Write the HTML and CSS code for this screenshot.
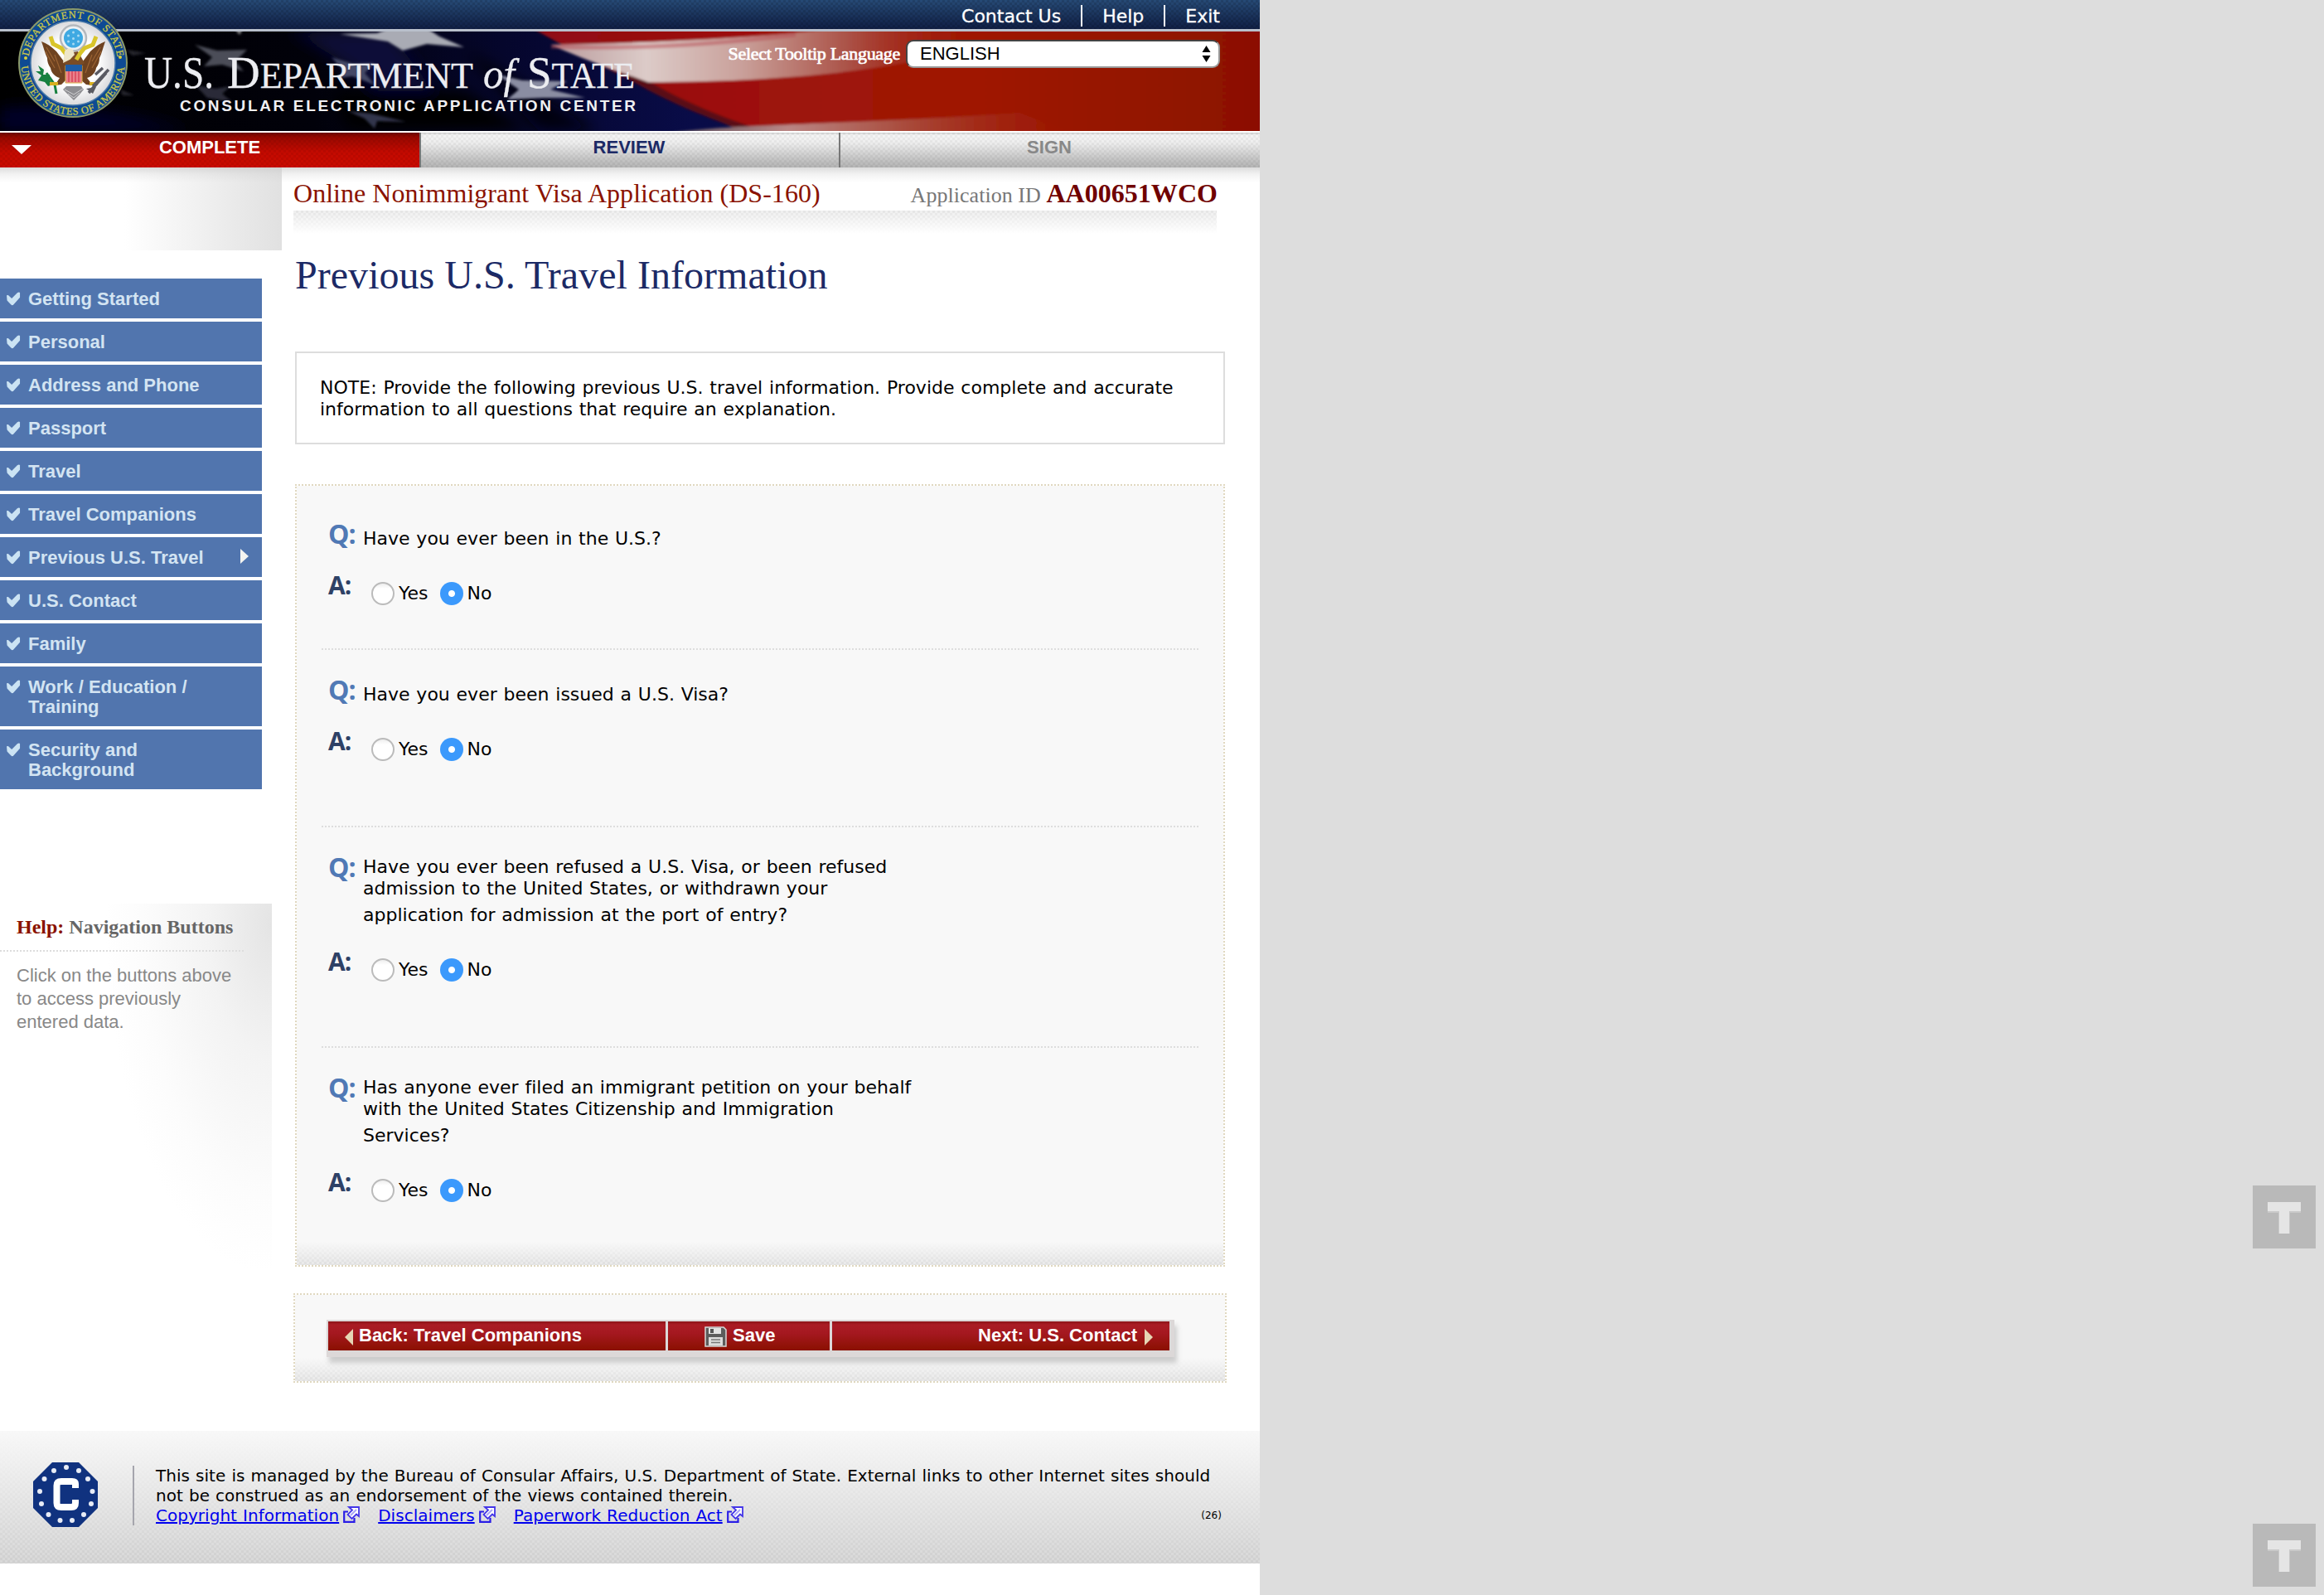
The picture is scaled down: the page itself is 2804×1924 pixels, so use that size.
FILE: index.html
```html
<!DOCTYPE html>
<html lang="en">
<head>
<meta charset="utf-8">
<title>Online Nonimmigrant Visa Application (DS-160)</title>
<link rel="stylesheet" href="styles.css">
</head>
<body>
<svg class="defs" width="0" height="0" aria-hidden="true">
  <defs>
    <symbol id="check" viewBox="0 0 18 18">
      <path d="M0 4 L2 3.6 L6.500 8 L13.6 .8 Q15.5 -.4 17 .4 L17 6.6 L9 15.6 Q7.4 18 5.4 15.6 L.6 10.6 Z" fill="#cbe3f3"/>
    </symbol>
    <symbol id="ext" viewBox="0 0 20 20">
      <path d="M6 6.500H1.200V18.800H13.500V14" fill="none" stroke="#2a1ee6" stroke-width="2.200"/>
      <path d="M7 1H19V12L16 9.500L10.500 15L5.500 10L11 4.600Z" fill="#fff" stroke="#4436e8" stroke-width="1.800"/>
      <path d="M9 11L16 4" stroke="#a9a4f5" stroke-width="2"/>
    </symbol>
    <symbol id="tee" viewBox="0 0 76 76">
      <rect width="76" height="76" fill="#b9b9b9"/>
      <path d="M18 21h40v12H45v25H31V33H18z" fill="#c9c9c9"/>
      <path d="M18 20h40v11H44v27H32V31H18z" fill="#e5e5e5"/>
    </symbol>
  </defs>
</svg>
<div class="page">
  <header class="header">
    <nav class="topbar">
      <a>Contact Us</a><a>Help</a><a>Exit</a>
    </nav>
    <div class="banner">
      <svg class="flag" width="1520" height="120" viewBox="0 38 1520 120" aria-hidden="true">
        <defs>
          <linearGradient id="red" x1="0" x2="1"><stop offset="0" stop-color="#8f0a12"/><stop offset=".25" stop-color="#9c1010"/><stop offset=".6" stop-color="#9f1700"/><stop offset="1" stop-color="#8a1000"/></linearGradient>
          <linearGradient id="navy" x1="0" x2="1"><stop offset="0" stop-color="#000"/><stop offset=".25" stop-color="#01010a"/><stop offset=".4" stop-color="#05062c"/><stop offset=".55" stop-color="#090c48"/><stop offset="1" stop-color="#0a0a3c"/></linearGradient>
          <linearGradient id="white" x1="0" x2="1"><stop offset="0" stop-color="#b99a9c"/><stop offset=".2" stop-color="#dccbc8"/><stop offset=".4" stop-color="#c9a09a"/><stop offset=".62" stop-color="#ab5348"/><stop offset=".9" stop-color="#9f1a08" stop-opacity="0"/></linearGradient>
          <linearGradient id="low" x1="0" x2="1"><stop offset="0" stop-color="#55505f"/><stop offset=".3" stop-color="#b98684"/><stop offset=".6" stop-color="#a84838"/><stop offset="1" stop-color="#a02010" stop-opacity="0"/></linearGradient>
          <filter id="soft" x="-10%" y="-10%" width="120%" height="120%"><feGaussianBlur stdDeviation="1.500"/></filter>
          <filter id="softer" x="-20%" y="-40%" width="140%" height="180%"><feGaussianBlur stdDeviation="9"/></filter>
        </defs>
        <rect y="38" width="1520" height="120" fill="url(#navy)"/>
        <g filter="url(#softer)">
          <path d="M0 130 Q120 125 230 158 H0Z" fill="#04062c"/>
          <path d="M350 38 H470 L560 158 H500 Q450 90 350 38Z" fill="#070838"/>
          <path d="M400 110 H560 L640 158 H420Z" fill="#000"/>
          <path d="M560 60 L720 158 H650Z" fill="#000010"/>
        </g>
        <g filter="url(#soft)">
          <path d="M635 30 H1540 V170 H925 C850 140 740 90 635 30Z" fill="url(#red)"/>
          <path d="M665 54 C760 52 900 48 1010 34 H1240 C1150 68 1040 98 780 99 C740 84 700 70 665 54Z" fill="url(#white)"/>
          <path d="M665 56 C760 60 860 54 960 42" fill="none" stroke="#b54a52" stroke-width="5" opacity=".5"/>
          <path d="M790 102 C830 125 870 140 920 158 L900 158 C830 135 780 110 740 84Z" fill="#5a0812"/>
          <path d="M800 162 C850 150 1040 150 1230 136 L1300 162Z" fill="url(#low)"/>
          <path d="M410 41 L455 40 L470 34 H515 L530 44 L560 57 L515 53 L486 61 L468 50Z" fill="#a9abb4"/>
          <path d="M235 54 L262 61 L298 60 L284 74 L294 86 L268 78 L246 80 L256 69Z" fill="#4b4d58"/>
          <path d="M400 69 L426 77 L452 76 L440 88 L452 102 L425 92 L410 94 L413 84Z" fill="#454866"/>
          <path d="M600 90 L630 97 L684 98 L664 108 L706 118 L655 118 L612 120 L626 108Z" fill="#8a8da2"/>
          <path d="M420 134 L448 137 L490 147 L455 146 L452 155 L440 143Z" fill="#33344c"/>
          <path d="M236 103 L260 107 L278 104 L268 113 L280 123 L250 118Z" fill="#2a2b38"/>
          <path d="M282 34 H294 L289 42Z" fill="#888"/>
          <path d="M152 60 L176 64 L160 67Z M145 108 L162 115 L148 115Z" fill="#26262e"/>
        </g>
      </svg>
      <svg class="logo" width="780" height="150" viewBox="0 0 780 150">
        <defs>
          <path id="arcTop" d="M34 76 A54 54 0 0 1 142 76"/>
          <path id="arcBot" d="M25.500 76 A62.500 62.500 0 0 0 150.500 76"/>
          <radialGradient id="disc"><stop offset=".6" stop-color="#fff"/><stop offset="1" stop-color="#d9d9dc"/></radialGradient>
        </defs>
        <circle cx="88" cy="76" r="66" fill="#8c9a6a"/>
        <circle cx="88" cy="76" r="64" fill="#0e4a93"/>
        <circle cx="88" cy="76" r="51" fill="url(#disc)" stroke="#4d7ba8" stroke-width="1.500"/>
        <text class="seal-text"><textPath href="#arcTop" startOffset="8" textLength="154">DEPARTMENT OF STATE</textPath></text>
        <text class="seal-text"><textPath href="#arcBot" startOffset="4" textLength="187">UNITED STATES OF AMERICA</textPath></text>
        <circle cx="31" cy="70" r="2" fill="#d8cf3c"/><circle cx="145" cy="69" r="2" fill="#d8cf3c"/>
        <circle cx="88.500" cy="46" r="15.500" fill="#eef1f3" stroke="#b4b8bd" stroke-width="2.500"/>
        <circle cx="88.500" cy="46" r="11.500" fill="#3fa9e2"/>
        <g fill="#a9dbf3"><circle cx="88.500" cy="39" r="1.500"/><circle cx="82.500" cy="43" r="1.500"/><circle cx="94.500" cy="43" r="1.500"/><circle cx="88.500" cy="46.500" r="1.500"/><circle cx="82.500" cy="50" r="1.500"/><circle cx="94.500" cy="50" r="1.500"/><circle cx="88.500" cy="53" r="1.500"/></g>
        <path d="M50 50 C56 52 62 56 68 62 L80 78 L80 96 L74 102 L66 103 L72 94 C66 92 62 88 61 82 C58 78 57 74 57 70 C54 64 53 58 50 50Z" fill="#6e4220"/>
        <path d="M127 50 C121 52 115 56 109 62 L97 78 L97 96 L104 102 L112 103 L105 94 C111 92 115 88 116 82 C119 78 120 74 120 70 C123 64 124 58 127 50Z" fill="#6e4220"/>
        <path d="M56 57 L66 74 M55 62 L66 82 M121 57 L111 74 M122 62 L111 82 M66 66 L74 88 M111 66 L103 88" stroke="#9c6434" stroke-width="1.200" fill="none"/>
        <path d="M82 64 L76 76 L80 79 H98 L102 76 L94 62Z" fill="#7a4c26"/>
        <path d="M61 44 L64 53 L74 58 L80 66 L86 70 M116 44 L112 54 L102 58 L97 64 L92 72" stroke="#d9c52a" stroke-width="5" fill="none"/>
        <path d="M78 62 Q82 56 88 60 L90 66 L84 72 L76 76Z" fill="#eee6c8"/>
        <path d="M79 79 H99 V100 H79Z" fill="#e9828c" stroke="#d9b64a"/>
        <path d="M83 86V99M87 86V99M91 86V99M95 86V99" stroke="#d9465a" stroke-width="1.500"/>
        <rect x="79" y="78" width="20" height="8" fill="#1d5ca6"/>
        <path d="M76 108 L80 104 H98 L101 108 L96 114 L89 121 L82 114Z" fill="#8e8e92"/>
        <path d="M78 108 L89 114 L100 107 M82 113 L89 118 L96 112" stroke="#d0d0d2" fill="none"/>
        <path d="M46 79 L53 84 L52 90 L60 90 L60 96 L64 102 L58 104 L54 99 L46 97 L50 91 L43 86 L49 86Z" fill="#17803f"/>
        <path d="M56 88 L66 102 L68 113" stroke="#17803f" stroke-width="3" fill="none"/>
        <path d="M60 101 H70M108 101H118" stroke="#d9b020" stroke-width="4"/>
        <path d="M107 112 L128 88 M112 104 L131 84 M115 90 L124 82" stroke="#5a5a62" stroke-width="3.500"/>
        <path d="M104 107 L116 105 L112 113Z" fill="#5a5a62"/>
        <g class="logo-name">
          <text x="174" y="106" font-size="55" textLength="84" lengthAdjust="spacingAndGlyphs">U.S.</text>
          <text x="274" y="106" textLength="297" lengthAdjust="spacingAndGlyphs"><tspan font-size="55">D</tspan><tspan font-size="44">EPARTMENT</tspan></text>
          <text x="583" y="106" font-size="50" font-style="italic" textLength="38" lengthAdjust="spacingAndGlyphs">of</text>
          <text x="636" y="106" textLength="130" lengthAdjust="spacingAndGlyphs"><tspan font-size="55">S</tspan><tspan font-size="44">TATE</tspan></text>
        </g>
        <text class="logo-sub" x="217" y="134" textLength="550">CONSULAR ELECTRONIC APPLICATION CENTER</text>
      </svg>
      <div class="lang">
        <label class="lang-label">Select Tooltip Language</label>
        <div class="lang-select"><span>ENGLISH</span>
          <svg width="11" height="20" viewBox="0 0 11 20"><path d="M5.500 0L10.500 8H.5ZM5.500 20L.5 12H10.500Z"/></svg>
        </div>
      </div>
    </div>
    <nav class="tabs">
      <a class="tab tab-active"><svg class="tab-arrow" width="24" height="11" viewBox="0 0 24 11"><path d="M0 0H24L12 11Z" fill="#fff"/></svg>COMPLETE</a>
      <a class="tab tab-next">REVIEW</a>
      <a class="tab tab-off">SIGN</a>
    </nav>
  </header>
  <div class="columns">
    <aside class="side">
      <div class="side-shade"></div>
      <ul class="menu">
        <li><svg class="ck"><use href="#check"/></svg><span>Getting Started</span></li>
        <li><svg class="ck"><use href="#check"/></svg><span>Personal</span></li>
        <li><svg class="ck"><use href="#check"/></svg><span>Address and Phone</span></li>
        <li><svg class="ck"><use href="#check"/></svg><span>Passport</span></li>
        <li><svg class="ck"><use href="#check"/></svg><span>Travel</span></li>
        <li><svg class="ck"><use href="#check"/></svg><span>Travel Companions</span></li>
        <li><svg class="ck"><use href="#check"/></svg><span>Previous U.S. Travel</span><svg class="here" width="10" height="18" viewBox="0 0 10 18"><path d="M0 0L10 9L0 18Z" fill="#f4f4f0"/></svg></li>
        <li><svg class="ck"><use href="#check"/></svg><span>U.S. Contact</span></li>
        <li><svg class="ck"><use href="#check"/></svg><span>Family</span></li>
        <li><svg class="ck"><use href="#check"/></svg><span>Work / Education /<br>Training</span></li>
        <li><svg class="ck"><use href="#check"/></svg><span>Security and<br>Background</span></li>
      </ul>
      <section class="help">
        <h3><em>Help:</em> Navigation Buttons</h3>
        <p>Click on the buttons above<br>to access previously<br>entered data.</p>
      </section>
    </aside>
    <main class="main">
      <div class="form-head">
        <span class="form-title">Online Nonimmigrant Visa Application (DS-160)</span>
        <span class="app-id">Application ID <b>AA00651WCO</b></span>
      </div>
      <div class="form-rule"></div>
      <h1>Previous U.S. Travel Information</h1>
      <div class="note">NOTE: Provide the following previous U.S. travel information. Provide complete and accurate<br>information to all questions that require an explanation.</div>
      <div class="panel">
        <section class="qa qa-1">
          <span class="q">Q:</span><p>Have you ever been in the U.S.?</p>
          <span class="a">A:</span><div class="choices"><i class="radio"></i><label>Yes</label><i class="radio on"></i><label>No</label></div>
        </section>
        <section class="qa qa-2">
          <span class="q">Q:</span><p>Have you ever been issued a U.S. Visa?</p>
          <span class="a">A:</span><div class="choices"><i class="radio"></i><label>Yes</label><i class="radio on"></i><label>No</label></div>
        </section>
        <section class="qa qa-long">
          <span class="q">Q:</span><p>Have you ever been refused a U.S. Visa, or been refused<br>admission to the United States, or withdrawn your<span class="last">application for admission at the port of entry?</span></p>
          <span class="a">A:</span><div class="choices"><i class="radio"></i><label>Yes</label><i class="radio on"></i><label>No</label></div>
        </section>
        <section class="qa qa-long">
          <span class="q">Q:</span><p>Has anyone ever filed an immigrant petition on your behalf<br>with the United States Citizenship and Immigration<span class="last">Services?</span></p>
          <span class="a">A:</span><div class="choices"><i class="radio"></i><label>Yes</label><i class="radio on"></i><label>No</label></div>
        </section>
      </div>
      <div class="actions">
        <div class="buttons">
          <a class="btn btn-back"><svg width="10" height="20" viewBox="0 0 10 20"><path d="M10 0V20L0 10Z" fill="#e6d6b4"/></svg><span>Back: Travel Companions</span></a>
          <a class="btn btn-save"><svg width="27" height="25" viewBox="0 0 27 25"><path d="M1 1H23L26 4V24H1Z" fill="#5c5c5c" stroke="#d8d8d8" stroke-width="1.500"/><rect x="5" y="2" width="15" height="7" fill="#e2e2e2"/><rect x="7" y="3" width="4" height="5" fill="#555"/><rect x="5" y="13" width="17" height="10" fill="#dcdcdc"/><path d="M8 16H19M8 19.500H19" stroke="#777" stroke-width="1.500"/></svg><span>Save</span></a>
          <a class="btn btn-fwd"><span>Next: U.S. Contact</span><svg width="10" height="20" viewBox="0 0 10 20"><path d="M0 0V20L10 10Z" fill="#e6d6b4"/></svg></a>
        </div>
      </div>
    </main>
  </div>
  <footer class="footer">
    <svg class="ca" width="78" height="78" viewBox="0 0 78 78">
      <path d="M23 0H55L78 23V55L55 78H23L0 55V23Z" fill="#10327f"/>
      <g fill="#e8ecf6"><circle cx="40" cy="6" r="3"/><circle cx="55" cy="10" r="3"/><circle cx="25" cy="10" r="3"/><circle cx="66" cy="20" r="3"/><circle cx="13.500" cy="20" r="3"/><circle cx="71.500" cy="35" r="3"/><circle cx="8" cy="35" r="3"/><circle cx="70" cy="50" r="3"/><circle cx="10" cy="50" r="3"/><circle cx="61" cy="63" r="3"/><circle cx="18.500" cy="63" r="3"/><circle cx="47" cy="70" r="3"/><circle cx="32.500" cy="70" r="3"/></g>
      <path d="M51 31V26Q51 23 47 23H34Q28.500 23 28.500 28V49Q28.500 54 34 54H46Q51 54 51 49V45" fill="none" stroke="#fff" stroke-width="8"/>
    </svg>
    <div class="legal">
      <div>This site is managed by the Bureau of Consular Affairs, U.S. Department of State. External links to other Internet sites should</div>
      <div>not be construed as an endorsement of the views contained therein.</div>
      <div class="links"><a>Copyright Information</a><svg width="20" height="20"><use href="#ext"/></svg><a>Disclaimers</a><svg width="20" height="20"><use href="#ext"/></svg><a>Paperwork Reduction Act</a><svg width="20" height="20"><use href="#ext"/></svg><small>(26)</small></div>
    </div>
  </footer>
</div>
<div class="badges">
  <svg width="76" height="76"><use href="#tee"/></svg>
  <svg width="76" height="76"><use href="#tee"/></svg>
</div>
</body>
</html>
```
FILE: styles.css
```css
* { box-sizing: border-box; margin: 0; padding: 0; }

:root {
  --sans: "Liberation Sans", Arial, sans-serif;
  --serif: "Liberation Serif", "Times New Roman", serif;
  --wide: Verdana, "DejaVu Sans", sans-serif;
  --hatch-dark: conic-gradient(rgba(0,0,0,.045) 25%, transparent 0 50%, rgba(0,0,0,.045) 0 75%, transparent 0);
}

body { display: flex; justify-content: space-between; height: 1924px; background: #ddd; font: 22px/26px var(--wide); color: #000; overflow: hidden; }
.defs { position: absolute; }
.page { width: 1520px; height: 1924px; background: #fff; }

/* header */
.topbar { display: flex; justify-content: flex-end; height: 38px; padding: 6px 48px 0 0; color: #fff; border-bottom: 3px solid #b9c0cc; -webkit-text-stroke: .3px #fff;
  background: conic-gradient(rgba(0,0,0,.12) 25%, transparent 0 50%, rgba(0,0,0,.12) 0 75%, transparent 0) 0 0/6px 6px, linear-gradient(#264a76, #101f45); }
.topbar a { height: 26px; line-height: 28px; padding-left: 24px; margin-left: 24px; border-left: 2px solid #fff; }
.topbar a:first-child { border: 0; }
.banner { position: relative; height: 120px; }
.flag { display: block; }
.logo { position: absolute; left: 0; top: -38px; }
.seal-text { font: 12.5px var(--serif); fill: #c9c648; stroke: #c9c648; stroke-width: .3px; }
.logo-name { font-family: var(--serif); fill: #eceDf1; stroke: #eceDf1; stroke-width: .3px; }
.logo-sub { font: bold 19px var(--sans); fill: #f0f0f2; }
.lang { position: absolute; right: 48px; top: 10px; display: flex; align-items: center; gap: 7px; }
.lang-label { font: 22px/34px var(--serif); letter-spacing: -.3px; color: #fff; -webkit-text-stroke: .7px #fff; }
.lang-select { display: flex; align-items: center; justify-content: space-between; width: 379px; height: 34px; padding: 0 9px 1px 15px; border: 2px solid #444; border-bottom-color: #999; border-right-color: #999; border-radius: 9px; background: #fff; font: 22px/28px var(--sans); }
.tabs { display: grid; grid-template-columns: 506px 506px 508px; height: 44px; border-top: 2px solid #fff; }
.tab { position: relative; height: 42px; padding: 3px 2px 0 0; text-align: center; font: bold 22px/30px var(--sans); color: #1c2a66; border-left: 2px solid #777;
  background: var(--hatch-dark) 0 0/6px 6px, linear-gradient(#d0d0d0 0, #f4f4f4 3px, #eee 12px, #bdbdbd 36px, #b4b4b4); }
.tab-active { padding-right: 0; color: #fff; border: 0; background: conic-gradient(rgba(0,0,0,.06) 25%, transparent 0 50%, rgba(0,0,0,.06) 0 75%, transparent 0) 0 0/6px 6px, linear-gradient(#6e0600, #9a0800 6px, #c40a00 24px, #ca0b00); }
.tab-off { color: #888; }
.tab-arrow { position: absolute; left: 14px; top: 15px; }

/* columns */
.columns { display: flex; height: 1524px; background: linear-gradient(#dcdcdc, #f2f2f2 8px, #fff 18px) no-repeat 0 0/100% 18px; }
.side { width: 340px; }
.side-shade { height: 100px; background: linear-gradient(90deg, rgba(220,220,220,0) 44%, rgba(210,210,210,.25) 65%, rgba(200,200,200,.55)); }
.menu { list-style: none; width: 316px; margin-top: 34px; display: flex; flex-direction: column; gap: 4px; }
.menu li { display: flex; padding: 13px 16px 11px 8px; background: #5175ae; color: #d3e4f2; font: bold 22px/24px var(--sans); }
.ck { width: 17px; height: 18px; margin: 3px 9px 0 0; flex: none; }
.here { margin: 1px 0 0 auto; }
.help { width: 328px; height: 440px; margin-top: 138px; padding-top: 12px; background: radial-gradient(200px 420px at 100% 6%, #e4e4e4, #f3f3f3 38%, #fcfcfc 78%, #fff); }
.help h3 { width: 294px; height: 46px; padding-left: 20px; font: bold 24px/32px var(--serif); color: #666; border-bottom: 2px dotted #ddd; }
.help h3 em { font-style: normal; color: #8a1200; }
.help p { padding: 15px 0 0 20px; font: 22px/28px var(--sans); color: #888; }

.main { width: 1180px; padding-left: 14px; }
.form-head { display: flex; justify-content: space-between; width: 1115px; height: 52px; padding-top: 15px; font: 32px/32px var(--serif); letter-spacing: .04px; color: #8a1200; }
.app-id { font-size: 26px; color: #777; }
.app-id b { font-size: 32px; color: #700000; }
.form-rule { width: 1114px; height: 28px; background: linear-gradient(rgba(255,255,255,0), #fff), var(--hatch-dark) 0 0/6px 6px, #efefef; }
h1 { margin-left: 2px; height: 142px; padding-top: 22px; font: 48px/56px var(--serif); letter-spacing: .04px; color: #1c2a66; }
.note { width: 1122px; height: 112px; margin-left: 2px; padding: 29px 30px 0 28px; border: 2px solid #ddd; white-space: nowrap; letter-spacing: .01px; word-spacing: .8px; }
.panel { width: 1122px; height: 944px; margin: 48px 0 0 2px; padding: 0 30px; }
.panel, .actions { border: 2px dotted #e0d8c0; background: linear-gradient(#f8f8f8 calc(100% - 28px), rgba(248,248,248,0)), var(--hatch-dark) 0 0/6px 6px, #e9e9e9; background-clip: padding-box; }
.qa { display: grid; grid-template-columns: 40px 1fr; align-content: start; width: 1058px; letter-spacing: .01px; word-spacing: .75px; }
.qa + .qa { border-top: 2px dotted #ddd; }
.qa-1 { height: 196px; padding-top: 43px; grid-template-rows: 62px 40px; }
.qa-2 { height: 214px; padding-top: 33px; grid-template-rows: 62px 40px; }
.qa-long { height: 266px; padding-top: 33px; grid-template-rows: 114px 40px; }
.q, .a { font: bold 32px/30px "Open Sans", var(--sans); color: #5079b5; letter-spacing: -1px; padding-left: 8px; }
.a { font-size: 30px; line-height: 29px; color: #2e4166; }
.qa p { padding: 8px 0 0 10px; white-space: nowrap; }
.qa-long p { padding-top: 2px; }
.last { display: block; padding-top: 6px; }
.choices { display: flex; align-items: center; height: 28px; margin: 11px 0 0 20px; }
.radio { width: 28px; height: 28px; border-radius: 50%; border: 2px solid #bbb; background: linear-gradient(#eee, #fff 25%); margin-right: 5px; flex: none; }
.radio.on { border: 0; background: radial-gradient(circle, #fff 3.5px, #3b99fc 4.5px); margin: 0 5px 0 14px; }
.actions { width: 1126px; height: 108px; margin-top: 32px; padding: 30px 0 0 38px; }
.buttons { display: flex; gap: 3px; width: 1023px; height: 45px; padding: 2px 0 0 2px; background: #dcd8d8; box-shadow: 3px 7px 6px #ccc; }
.btn { display: flex; align-items: center; height: 35px; font: bold 22px/30px var(--sans); color: #fff; background: linear-gradient(#8c1418, #aa1c24 4px, #a51820 14px, #8a1000); white-space: nowrap; }
.btn span { padding-bottom: 2px; }
.btn svg { margin-top: 2px; }
.btn-back { width: 407px; padding-left: 20px; gap: 7px; }
.btn-save { width: 195px; padding-left: 44px; gap: 7px; }
.btn-fwd { width: 407px; justify-content: flex-end; padding-right: 20px; gap: 9px; }

/* footer */
.footer { display: flex; height: 160px; padding: 38px 0 0 40px; background: linear-gradient(#f8f8f8, rgba(244,244,244,0)), var(--hatch-dark) 0 0/6px 6px, #d8d8d8; }
.legal { margin: 4px 0 0 42px; padding-left: 26px; height: 72px; border-left: 2px solid #a5a5ad; font-size: 20px; line-height: 24px; white-space: nowrap; letter-spacing: .03px; word-spacing: .7px; }
.legal > div { height: 24px; }
.links { display: flex; width: 1286px; }
.links a { color: #00e; text-decoration: underline; }
.links svg { margin: 1px 22px 0 5px; }
.links small { margin-left: auto; font-size: 12px; }

.badges { display: flex; flex-direction: column; gap: 332px; padding: 1430px 10px 0 0; }
.badges svg { display: block; }
```
